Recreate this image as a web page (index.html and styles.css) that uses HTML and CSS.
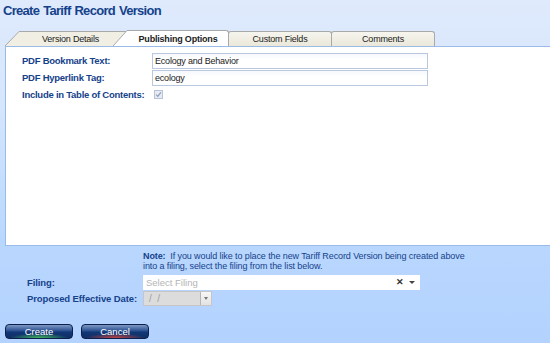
FILE: index.html
```html
<html>

<head>
    <meta charset="utf-8" />
    <title>Create Tariff Record Version</title>
    <link rel="stylesheet" href="styles.css">
</head>

<body>
    <h1 class="title">Create Tariff Record Version</h1>

    <div class="tabs">
        <div class="tab tab-first">
            <svg class="slant" width="15" height="15" viewBox="0 0 15 15">
                <polygon points="0,15 14,0.5 15,0.5 15,15" fill="#f1efe4" />
                <line x1="0" y1="15" x2="14" y2="0.5" stroke="#a9a9a9" />
                <line x1="14" y1="0.5" x2="15" y2="0.5" stroke="#a9a9a9" />
            </svg>
            <span class="tab-body">Version Details</span>
        </div>
        <div class="tab tab-active">
            <svg class="slant" width="15" height="16" viewBox="0 0 15 16">
                <polygon points="0,16 14,0.5 15,0.5 15,16" fill="#fff" />
                <line x1="0" y1="16" x2="14" y2="0.5" stroke="#a9a9a9" />
                <line x1="14" y1="0.5" x2="15" y2="0.5" stroke="#a9a9a9" />
            </svg>
            <span class="tab-body">Publishing Options</span>
        </div>
        <div class="tab tab-plain">
            <span class="tab-body">Custom Fields</span>
        </div>
        <div class="tab tab-plain">
            <span class="tab-body">Comments</span>
        </div>
    </div>

    <div class="panel">
        <div class="field-row">
            <label class="field-label">PDF Bookmark Text:</label>
            <div class="text-box">Ecology and Behavior</div>
        </div>
        <div class="field-row">
            <label class="field-label">PDF Hyperlink Tag:</label>
            <div class="text-box">ecology</div>
        </div>
        <div class="field-row">
            <label class="field-label">Include in Table of Contents:</label>
            <span class="check">
                <svg width="9" height="9" viewBox="0 0 9 9">
                    <rect x="0.5" y="0.5" width="8" height="8" fill="#e6ebf3" stroke="#b7c3d6" />
                    <path d="M2.2 4.6 L3.8 6.3 L6.9 2.4" fill="none" stroke="#8e9bb3" stroke-width="1.2" />
                </svg>
            </span>
        </div>
    </div>

    <p class="note"><b>Note:</b>&nbsp; If you would like to place the new Tariff Record Version being created above<br>into a filing, select the filing from the list below.</p>

    <div class="form">
        <div class="form-row">
            <label class="form-label">Filing:</label>
            <div class="combo">
                <span class="placeholder">Select Filing</span>
                <span class="clear">&#x2715;</span>
                <span class="arrow"></span>
            </div>
        </div>
        <div class="form-row">
            <label class="form-label">Proposed Effective Date:</label>
            <div class="date-box">
                <span class="date-text">/ &nbsp;/</span>
                <span class="date-btn"><span class="arrow small"></span></span>
            </div>
        </div>
    </div>

    <div class="buttons">
        <button class="btn btn-create">Create</button>
        <button class="btn btn-cancel">Cancel</button>
    </div>
</body>

</html>
```

FILE: styles.css
```css
* {
    margin: 0;
    padding: 0;
}

body {
    width: 550px;
    height: 343px;
    overflow: hidden;
    background: linear-gradient(#dfeafc, #d6e6fd 30%, #b9d7fe 70%, #b3d2fe);
    font-family: "Liberation Sans", sans-serif;
    color: #15428b;
}

.title {
    font-size: 13px;
    font-weight: bold;
    color: #15428b;
    padding: 3px 0 0 3px;
    height: 28px;
    letter-spacing: -0.7px;
    word-spacing: 1px;
}

/* tabs */
.tabs {
    display: flex;
    margin-left: 5px;
    height: 15px;
    align-items: flex-end;
}

.tab {
    display: flex;
    height: 15px;
    font-size: 9px;
    letter-spacing: -0.2px;
    color: #222;
    position: relative;
    white-space: nowrap;
}

.tab-body {
    display: block;
    text-align: center;
    line-height: 15px;
    background: linear-gradient(#f6f5ee, #ebe8da);
    border-top: 1px solid #a9a9a9;
    border-right: 1px solid #a9a9a9;
    border-top-right-radius: 3px;
    box-sizing: border-box;
}

.tab-first .tab-body {
    width: 108px;
    padding-right: 6px;
    background: #f1efe4;
}

.tab-active {
    height: 16px;
    margin-left: -15px;
    z-index: 2;
    font-weight: bold;
}

.tab-active .tab-body {
    width: 101px;
    line-height: 16px;
    background: #fff;
}

.tab-plain .tab-body {
    width: 104px;
    border-left: 1px solid #a9a9a9;
    border-top-left-radius: 3px;
    margin-left: -1px;
}

/* panel */
.panel {
    margin-left: 5px;
    height: 200px;
    background: #fff;
    border: 1px solid #99bbe8;
    border-right: 0;
    box-sizing: border-box;
    padding: 5px 0 0 16px;
}

.field-row {
    display: flex;
    align-items: center;
    height: 17px;
}

.field-label {
    width: 130px;
    font-size: 9.5px;
    font-weight: bold;
    color: #15428b;
    white-space: nowrap;
    letter-spacing: -0.25px;
}

.text-box {
    width: 276px;
    height: 16px;
    box-sizing: border-box;
    border: 1px solid #b9c8de;
    background: linear-gradient(#f6f8fc, #fff 40%);
    font-size: 9px;
    letter-spacing: -0.2px;
    color: #222;
    line-height: 14px;
    padding-left: 2px;
}

.check {
    display: flex;
    margin-left: 2px;
}

/* note and lower form */
.note {
    padding: 5px 0 0 143px;
    height: 22px;
    font-size: 9px;
    line-height: 10px;
    letter-spacing: -0.1px;
    color: #15428b;
    white-space: nowrap;
}

.form {
    padding-left: 27px;
    margin-top: 1px;
}

.form-row {
    display: flex;
    align-items: center;
    height: 16px;
}

.form-label {
    width: 116px;
    font-size: 9.5px;
    font-weight: bold;
    color: #15428b;
    white-space: nowrap;
    letter-spacing: -0.1px;
}

.combo {
    display: flex;
    align-items: center;
    width: 277px;
    height: 15px;
    background: #fff;
    font-size: 9.5px;
}

.placeholder {
    flex: 1;
    padding-left: 3px;
    color: #b4b4b4;
}

.clear {
    font-size: 9px;
    font-weight: bold;
    color: #333;
    margin-right: 5px;
}

.arrow {
    width: 0;
    height: 0;
    border-left: 3px solid transparent;
    border-right: 3px solid transparent;
    border-top: 3px solid #444;
    margin-right: 5px;
}

.date-box {
    display: flex;
    width: 69px;
    height: 15px;
    background: #dcdcdc;
    border: 1px solid #c6c6c6;
    box-sizing: border-box;
}

.date-text {
    flex: 1;
    font-size: 10px;
    line-height: 13px;
    color: #a0a0a0;
    padding-left: 5px;
}

.date-btn {
    display: flex;
    align-items: center;
    justify-content: center;
    width: 10px;
    background: linear-gradient(#f7f7f7, #e2e2e2);
    border-left: 1px solid #b5b5b5;
}

.arrow.small {
    margin: 0;
    border-top-color: #777;
    border-left-width: 2px;
    border-right-width: 2px;
}

/* buttons */
.buttons {
    display: flex;
    gap: 8px;
    padding: 18px 0 0 5px;
}

.btn {
    width: 68px;
    height: 15px;
    border: 1px solid #0c1f4d;
    border-radius: 4px;
    font-family: "Liberation Sans", sans-serif;
    font-size: 9.5px;
    color: #fff;
    line-height: 13px;
    cursor: pointer;
}

.btn-create {
    background: radial-gradient(ellipse 45% 35% at 50% 100%, rgba(70, 200, 90, 0.9), rgba(70, 200, 90, 0) 100%),
        linear-gradient(#7d98c4, #2b4f8f 45%, #123775 55%, #0f2e66);
}

.btn-cancel {
    background: radial-gradient(ellipse 45% 35% at 50% 100%, rgba(220, 70, 60, 0.9), rgba(220, 70, 60, 0) 100%),
        linear-gradient(#7d98c4, #2b4f8f 45%, #123775 55%, #0f2e66);
}
```
